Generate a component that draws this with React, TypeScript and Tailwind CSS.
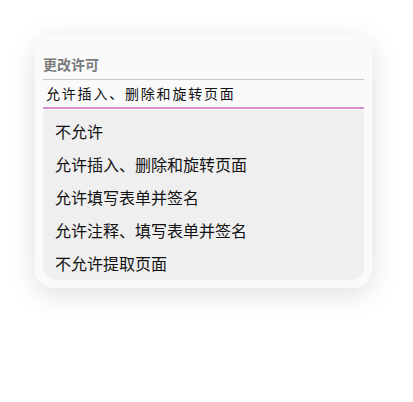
import React from 'react';

const options = [
  '不允许',
  '允许插入、删除和旋转页面',
  '允许填写表单并签名',
  '允许注释、填写表单并签名',
  '不允许提取页面',
];

export default function App() {
  return (
    <div className="w-[413px] h-[402px] bg-white pt-[35px] pl-[35px] font-['Noto_Sans_CJK_SC','Noto_Sans',sans-serif]">
      <div className="w-[337px] rounded-[18px] bg-[#fafafa] px-[8px] pt-[21px] pb-[8px] shadow-[0_6px_28px_rgba(0,0,0,0.13)]">
        <div className="h-[17px] leading-[17px] text-[14px] font-bold text-[#7a7a7a]">更改许可</div>
        <div className="mt-[6px] h-px bg-[#c6c6c6]" />
        <div className="h-[27px] pl-[3px] flex items-center text-[14px] tracking-[1.8px] text-[#111]">
          允许插入、删除和旋转页面
        </div>
        <div className="h-[1.5px] bg-[#d68fd6]" />
        <ul className="mt-[1px] bg-[#efefef] rounded-b-[14px] pt-[5px]">
          {options.map((o) => (
            <li key={o} className="h-[33px] flex items-center pl-[12px] text-[16px] text-[#111]">
              {o}
            </li>
          ))}
        </ul>
      </div>
    </div>
  );
}
